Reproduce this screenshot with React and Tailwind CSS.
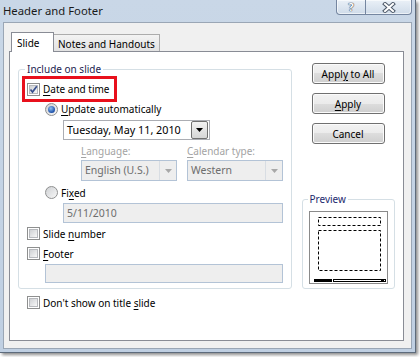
import React from "react";

function Check({ checked }) {
  return (
    <span className="w-[13px] h-[13px] shrink-0 border border-[#8e8f8f] bg-white p-[1px] flex">
      <span className="relative flex-1 border border-[#b7b9bd] bg-[linear-gradient(135deg,#cfd1d4,#f7f7f7)]">
        {checked && (
          <svg className="absolute left-[-1px] top-[-1px]" width="9" height="9" viewBox="0 0 9 9">
            <path d="M1.5 4.5 L3.5 7 L7.8 1.2" fill="none" stroke="#39508f" strokeWidth="1.7" />
          </svg>
        )}
      </span>
    </span>
  );
}

function Radio({ checked }) {
  return (
    <span className="w-[13px] h-[13px] shrink-0 rounded-full border border-[#8e8f8f] bg-[linear-gradient(135deg,#cfd1d4,#f7f7f7)] flex items-center justify-center">
      {checked && (
        <span className="w-[7px] h-[7px] rounded-full bg-[radial-gradient(circle_at_40%_35%,#8fc0f2,#1c4fa8_70%,#16347a)]" />
      )}
    </span>
  );
}

function U({ children }) {
  return <span className="underline underline-offset-[2px] decoration-[1px]">{children}</span>;
}

function Btn({ children }) {
  return (
    <div className="h-[21px] w-[73px] rounded-[3px] border border-[#707070] bg-[linear-gradient(#f2f2f2_0%,#ebebeb_50%,#dddddd_50%,#cfcfcf_100%)] shadow-[inset_0_0_0_1px_#fbfbfb] flex items-center justify-center text-black">
      <span className="whitespace-nowrap leading-[14px]">{children}</span>
    </div>
  );
}

function DisabledCombo({ text }) {
  return (
    <div className="w-[96px] h-[21px] border border-[#b3c3d6] bg-[#eeeeee] flex items-center">
      <span className="flex-1 pl-[3px] text-[#6d6d6d] text-[10.5px] leading-none whitespace-nowrap">{text}</span>
      <span className="w-[17px] h-full border-l border-[#d8dde3] flex items-center justify-center">
        <svg width="7" height="4" viewBox="0 0 7 4"><path d="M0 0 H7 L3.5 4 Z" fill="#a8a8a8" /></svg>
      </span>
    </div>
  );
}

export default function App() {
  return (
    <div className="w-[420px] h-[357px] bg-white overflow-hidden font-['Noto_Sans',sans-serif] text-[10px] text-black whitespace-nowrap">
      <div className="w-[416px] h-[353px] bg-[linear-gradient(#c9d7e7,#bfcfe2)] border-r border-b border-[#5d6b7c] shadow-[2px_2px_3px_rgba(0,0,0,0.45)] flex flex-col">
        {/* title bar */}
        <div className="h-[22px] flex justify-between items-start shrink-0">
          <div className="pl-[3px] pt-[3px] text-[11.3px] leading-[15px] text-[#1a1a1a]">Header and Footer</div>
          <div className="mr-[3px] h-[15px] flex border border-t-0 border-[#7586a0] rounded-b-[4px] overflow-hidden bg-[linear-gradient(#eaf0f7,#cfdbe9)] shadow-[inset_0_0_0_1px_rgba(255,255,255,0.6)]">
            <div className="w-[28px] h-[14px] flex items-center justify-center text-white text-[11px] leading-[12px] font-bold [text-shadow:0_0_1px_#3d4a5c,0_0_1px_#3d4a5c,0_0_1px_#3d4a5c]">?</div>
            <div className="w-[46px] border-l border-[#7586a0] flex items-center justify-center">
              <svg width="14" height="11" viewBox="0 0 14 11">
                <path d="M3 2 L11 9 M11 2 L3 9" stroke="#4f5b6b" strokeWidth="4" strokeLinecap="square" />
                <path d="M3 2 L11 9 M11 2 L3 9" stroke="#ffffff" strokeWidth="2" strokeLinecap="square" />
              </svg>
            </div>
          </div>
        </div>

        {/* client area */}
        <div className="flex-1 mx-[3px] mb-[3px] bg-[#f0f0f0] border border-[#9aa6b5] pl-[5px] pr-[7px] pt-[9px] pb-[7px] flex flex-col">
          {/* tabs */}
          <div className="h-[20px] flex items-start pl-[2px] -mb-px relative z-10 shrink-0">
            <div className="h-[20px] w-[43px] bg-white border border-b-0 border-[#898c95] pl-[5px] pt-[3px] leading-[14px]">Slide</div>
            <div className="mt-[2px] h-[17px] w-[106px] border border-l-0 border-b-0 border-[#acacac] bg-[linear-gradient(#f3f3f3,#e2e2e2)] pl-[4px] pt-[2px] leading-[14px]">Notes and Handouts</div>
          </div>

          {/* panel */}
          <div className="flex-1 bg-white border border-[#898c95] flex px-[8px] pt-[10px]">
            {/* left column */}
            <div className="w-[275px] flex flex-col">
              <fieldset className="border border-[#d5dfe5] rounded-[3px] pb-[5px] m-0 flex flex-col">
                <legend className="ml-[6px] px-[2px] leading-[15px] text-[#1c2450]">Include on slide</legend>
                <div className="-mt-px ml-[3px] w-[95px] h-[26px] border-[3px] border-[#e8101c] pl-[2px] flex items-center gap-[3px]">
                  <Check checked />
                  <span className="leading-[14px]"><U>D</U>ate and time</span>
                </div>
                <div className="ml-[26px] h-[14px] flex items-center gap-[3px]">
                  <Radio checked />
                  <span className="leading-[14px]"><U>U</U>pdate automatically</span>
                </div>
                <div className="ml-[44px] mt-[4px] w-[147px] h-[20px] border border-[#abadb3] bg-white flex items-center">
                  <span className="flex-1 pl-[3px] leading-none text-[10.8px]">Tuesday, May 11, 2010</span>
                  <span className="w-[17px] h-[18px] mr-[1px] rounded-[2px] border border-[#707070] bg-[linear-gradient(#f2f2f2,#d6d6d6)] flex items-center justify-center">
                    <svg width="7" height="4" viewBox="0 0 7 4"><path d="M0 0 H7 L3.5 4 Z" fill="#000" /></svg>
                  </span>
                </div>
                <div className="ml-[62px] mt-[5px] h-[13px] flex gap-[10px] text-[#a3a3a3] leading-[13px]">
                  <span className="w-[96px]"><U>L</U>anguage:</span>
                  <span><U>C</U>alendar type:</span>
                </div>
                <div className="ml-[62px] mt-[2px] flex gap-[10px]">
                  <DisabledCombo text="English (U.S.)" />
                  <DisabledCombo text="Western" />
                </div>
                <div className="ml-[26px] mt-[4px] h-[15px] flex items-center gap-[3px]">
                  <Radio />
                  <span className="leading-[14px]">Fi<U>x</U>ed</span>
                </div>
                <div className="ml-[44px] mt-[3px] w-[220px] h-[20px] border border-[#b3c3d6] bg-[#eeeeee] pl-[3px] flex items-center text-[#6d6d6d] text-[10.5px] leading-none">5/11/2010</div>
                <div className="ml-[8px] mt-[3px] h-[15px] flex items-center gap-[3px]">
                  <Check />
                  <span className="leading-[14px]">Slide <U>n</U>umber</span>
                </div>
                <div className="ml-[8px] mt-[5px] h-[15px] flex items-center gap-[3px]">
                  <Check />
                  <span className="leading-[14px]"><U>F</U>ooter</span>
                </div>
                <div className="ml-[26px] mt-[3px] w-[238px] h-[19px] border border-[#b3c3d6] bg-[#eeeeee]" />
              </fieldset>
              <div className="ml-[9px] mt-[6px] h-[15px] flex items-center gap-[3px]">
                <Check />
                <span className="leading-[14px]">Don't show on title <U>s</U>lide</span>
              </div>
            </div>

            {/* right column */}
            <div className="ml-[10px] w-[94px] flex flex-col">
              <div className="ml-[10px] mt-[1px] flex flex-col gap-[9px]">
                <Btn>Appl<U>y</U> to All</Btn>
                <Btn><U>A</U>pply</Btn>
                <Btn>Cancel</Btn>
              </div>
              <fieldset className="mt-[48px] border border-[#d5dfe5] rounded-[3px] pb-[4px] m-0 flex flex-col">
                <legend className="ml-[5px] px-[2px] leading-[15px] text-[#1c2a6e]">Preview</legend>
                <div className="mt-[4px] ml-[6px] w-[79px] h-[73px]">
                  <svg width="79" height="73" viewBox="0 0 79 73">
                    <rect x="0.5" y="0.5" width="78" height="72" fill="#fff" stroke="#8a8a8a" />
                    <rect x="9.5" y="6.5" width="62" height="8" fill="none" stroke="#000" strokeDasharray="3 2" />
                    <rect x="9.5" y="19.5" width="62" height="40" fill="none" stroke="#000" strokeDasharray="3 2" />
                    <rect x="5" y="68" width="18" height="3" fill="#000" />
                    <rect x="24.5" y="68.5" width="52" height="2" fill="#fff" stroke="#000" />
                    <rect x="72" y="68" width="3" height="3" fill="#000" />
                  </svg>
                </div>
              </fieldset>
            </div>
          </div>
        </div>
      </div>
    </div>
  );
}
